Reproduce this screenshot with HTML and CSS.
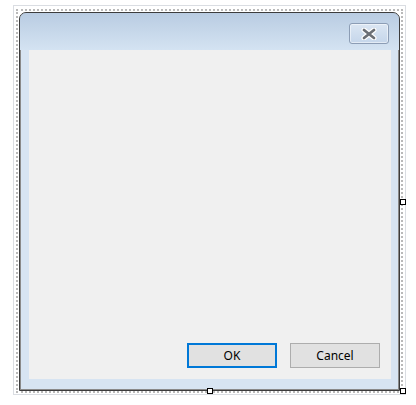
FILE: index.html
```html
<!DOCTYPE html>
<html>
<head>
<meta charset="utf-8">
<link rel="stylesheet" href="styles.css">
</head>
<body>
<div class="canvas">
  <div class="selection">
    <div class="window">
      <div class="titlebar">
        <div class="close">
          <svg width="18" height="12" viewBox="0 0 18 12">
            <path d="M4 2 L14 10 M14 2 L4 10" stroke="#ffffff" stroke-width="5" stroke-linecap="round" fill="none"/>
            <path d="M4 2 L14 10 M14 2 L4 10" stroke="#6b6f75" stroke-width="2.8" stroke-linecap="round" fill="none"/>
          </svg>
        </div>
      </div>
      <div class="frame">
        <div class="content">
          <div class="buttons">
            <button class="btn btn-default">OK</button>
            <button class="btn">Cancel</button>
          </div>
        </div>
      </div>
    </div>
  </div>
  <span class="handle h-bottom"></span>
  <span class="handle h-corner"></span>
  <span class="handle h-right"></span>
</div>
</body>
</html>
```
FILE: styles.css
```css
html, body {
  margin: 0;
  padding: 0;
  background: #ffffff;
}
.canvas {
  position: relative;
  box-sizing: border-box;
  margin: 5px 0 0 13px;
  width: 393px;
  height: 390px;
  border: 1px solid #dadde2;
  padding: 3px 2px 1px 2px;
}
.selection {
  box-sizing: border-box;
  height: 100%;
  border: 2px dotted #b9b9b9;
  padding: 1px 1px 0 1px;
  display: flex;
  flex-direction: column;
}
.window {
  box-sizing: border-box;
  flex: 1;
  border: 1px solid #3c3c3c;
  border-radius: 7px 7px 0 0;
  box-shadow: inset 1px 1px 0 #8a8a8a, inset -1px 0 0 #8a8a8a, inset 0 -1px 0 #8a8a8a;
  background: #d7e4f2;
  display: flex;
  flex-direction: column;
  overflow: hidden;
}
.titlebar {
  height: 37px;
  flex: none;
  box-sizing: border-box;
  background: linear-gradient(#b9cce2, #d4e3f2);
  display: flex;
  justify-content: flex-end;
  align-items: flex-start;
  padding: 10px 10px 0 0;
}
.close {
  box-sizing: border-box;
  width: 40px;
  height: 21px;
  border: 1px solid #8c9db5;
  border-radius: 3px;
  background: linear-gradient(#dbe6f3, #c5d6ea);
  box-shadow: inset 0 0 0 1px rgba(255,255,255,0.5);
  display: flex;
  align-items: center;
  justify-content: center;
}
.close svg {
  display: block;
}
.frame {
  flex: 1;
  padding: 0 8px 11px 9px;
  display: flex;
  flex-direction: column;
}
.content {
  flex: 1;
  background: #f0f0f0;
  display: flex;
  flex-direction: column;
  justify-content: flex-end;
}
.buttons {
  display: flex;
  justify-content: flex-end;
  gap: 13px;
  padding: 0 11px 11px 0;
}
.btn {
  box-sizing: border-box;
  width: 90px;
  height: 25px;
  margin: 0;
  padding: 0;
  background: #e1e1e1;
  border: 1px solid #adadad;
  font-family: "Noto Sans", "Open Sans", sans-serif;
  font-size: 12px;
  color: #000000;
}
.btn-default {
  border: 2px solid #0078d7;
}
.handle {
  position: absolute;
  box-sizing: border-box;
  width: 6px;
  height: 6px;
  background: #ffffff;
  border: 1px solid #000000;
}
.h-bottom {
  left: 193px;
  top: 382px;
}
.h-corner {
  left: 386px;
  top: 382px;
}
.h-right {
  left: 386px;
  top: 193px;
}
```
